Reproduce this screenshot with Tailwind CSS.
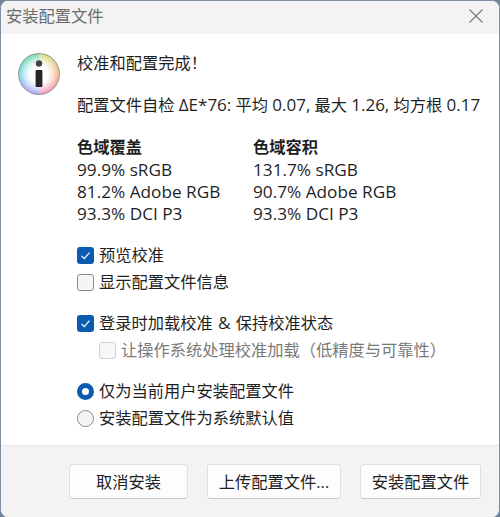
<!DOCTYPE html>
<html lang="zh">
  <head>
    <meta charset="UTF-8" />
    <title>安装配置文件</title>
    <script src="https://cdn.jsdelivr.net/npm/@tailwindcss/browser@4"></script>
  </head>
  <body class="bg-[#6f8296]">
    <div class="w-[500px] h-[517px] flex flex-col bg-white rounded-[8px] overflow-hidden border-l border-r border-t border-[#7f8fa0] text-[16.25px] leading-[22px] text-[#1f1f1f] font-['Open_Sans','Noto_Sans_CJK_SC',sans-serif]">
      <!-- title bar -->
      <div class="h-[33px] shrink-0 bg-[#f3f3f3] flex items-center justify-between pl-[5px] pr-[15px] pb-[3px]">
        <span class="text-[#6d6d6d]">安装配置文件</span>
        <svg class="w-[16px] h-[16px]" viewBox="0 0 16 16" fill="none" stroke="#777" stroke-width="1.1"><path d="M1.5 1.5l13 13M14.5 1.5l-13 13" /></svg>
      </div>

      <!-- content -->
      <div class="flex-1 flex pl-[16px] pt-[18px]">
        <svg class="w-[44px] h-[44px] shrink-0 blur-[0.4px]" viewBox="0 0 44 44">
          <defs>
            <radialGradient id="glow" cx="50%" cy="50%" r="50%">
              <stop offset="0.45" stop-color="#fff" />
              <stop offset="0.75" stop-color="#fff" stop-opacity="0.55" />
              <stop offset="1" stop-color="#fff" stop-opacity="0" />
            </radialGradient>
            <linearGradient id="left" x1="0" y1="0" x2="0" y2="1">
              <stop offset="0" stop-color="#7fe0a8" />
              <stop offset="0.5" stop-color="#7fd8ee" />
              <stop offset="1" stop-color="#b9a6f2" />
            </linearGradient>
            <linearGradient id="right" x1="0" y1="0" x2="0" y2="1">
              <stop offset="0" stop-color="#d8e88a" />
              <stop offset="0.5" stop-color="#f6b58e" />
              <stop offset="1" stop-color="#f09cc8" />
            </linearGradient>
          </defs>
          <circle cx="22" cy="22" r="21" fill="#9a9a9a" />
          <path d="M22 2a20 20 0 0 0 0 40z" fill="url(#left)" />
          <path d="M22 2a20 20 0 0 1 0 40z" fill="url(#right)" />
          <circle cx="22" cy="22" r="19.5" fill="url(#glow)" />
          <circle cx="22" cy="11.5" r="3.2" fill="#444" />
          <rect x="18.6" y="18" width="6.8" height="17" rx="0.8" fill="#262626" />
        </svg>

        <div class="ml-[16px] flex-1">
          <p>校准和配置完成！</p>
          <p class="mt-[20px] whitespace-nowrap">配置文件自检 <span class="text-[17px]">ΔE*76:</span> 平均 <span class="text-[17px]">0.07,</span> 最大 <span class="text-[17px]">1.26,</span> 均方根 <span class="text-[17px]">0.17</span></p>

          <div class="mt-[20px] flex text-[17.2px]">
            <div class="w-[176px]">
              <p class="font-semibold text-[16.25px] mb-[1px]">色域覆盖</p>
              <p>99.9% sRGB</p>
              <p>81.2% Adobe RGB</p>
              <p>93.3% DCI P3</p>
            </div>
            <div>
              <p class="font-semibold text-[16.25px] mb-[1px]">色域容积</p>
              <p>131.7% sRGB</p>
              <p>90.7% Adobe RGB</p>
              <p>93.3% DCI P3</p>
            </div>
          </div>

          <div class="mt-[19px] flex flex-col gap-[5px]">
            <div class="flex items-center gap-[5px] h-[22px]">
              <span class="w-[17px] h-[17px] rounded-[3px] bg-[#0a5cb0] flex items-center justify-center">
                <svg class="w-[11px] h-[11px]" viewBox="0 0 11 11" fill="none" stroke="#fff" stroke-width="1.2"><path d="M1.5 5.8l2.8 2.8 5.2-6" /></svg>
              </span>
              <span>预览校准</span>
            </div>
            <div class="flex items-center gap-[5px] h-[22px]">
              <span class="w-[17px] h-[17px] rounded-[3px] bg-[#f5f5f5] border border-[#8a8a8a]"></span>
              <span>显示配置文件信息</span>
            </div>
          </div>

          <div class="mt-[19px] flex flex-col gap-[5px]">
            <div class="flex items-center gap-[5px] h-[22px]">
              <span class="w-[17px] h-[17px] rounded-[3px] bg-[#0a5cb0] flex items-center justify-center">
                <svg class="w-[11px] h-[11px]" viewBox="0 0 11 11" fill="none" stroke="#fff" stroke-width="1.2"><path d="M1.5 5.8l2.8 2.8 5.2-6" /></svg>
              </span>
              <span>登录时加载校准 <span class="text-[17.2px] mx-[1px]">&amp;</span> 保持校准状态</span>
            </div>
            <div class="flex items-center gap-[5px] h-[22px] pl-[22px] text-[#7a7a7a]">
              <span class="w-[17px] h-[17px] rounded-[3px] bg-[#f7f7f7] border border-[#d0d0d0]"></span>
              <span>让操作系统处理校准加载（低精度与可靠性）</span>
            </div>
          </div>

          <div class="mt-[19px] flex flex-col gap-[5px]">
            <div class="flex items-center gap-[5px] h-[22px]">
              <span class="w-[17px] h-[17px] rounded-full border-[5px] border-[#0a5cb0] bg-white"></span>
              <span>仅为当前用户安装配置文件</span>
            </div>
            <div class="flex items-center gap-[5px] h-[22px]">
              <span class="w-[17px] h-[17px] rounded-full border border-[#8a8a8a] bg-[#f5f5f5]"></span>
              <span>安装配置文件为系统默认值</span>
            </div>
          </div>
        </div>
      </div>

      <!-- footer -->
      <div class="h-[72px] shrink-0 bg-[#f3f3f3] border-t border-[#e6e6e6] flex justify-end gap-[19px] pt-[18px] pr-[18px]">
        <button class="w-[119px] h-[35px] bg-[#fdfdfd] rounded-[4px] border border-[#dfdfdf] border-b-[#c8c8c8]">取消安装</button>
        <button class="w-[134px] h-[35px] bg-[#fdfdfd] rounded-[4px] border border-[#dfdfdf] border-b-[#c8c8c8]">上传配置文件...</button>
        <button class="w-[121px] h-[35px] bg-[#fdfdfd] rounded-[4px] border border-[#dfdfdf] border-b-[#c8c8c8]">安装配置文件</button>
      </div>
    </div>
  </body>
</html>
